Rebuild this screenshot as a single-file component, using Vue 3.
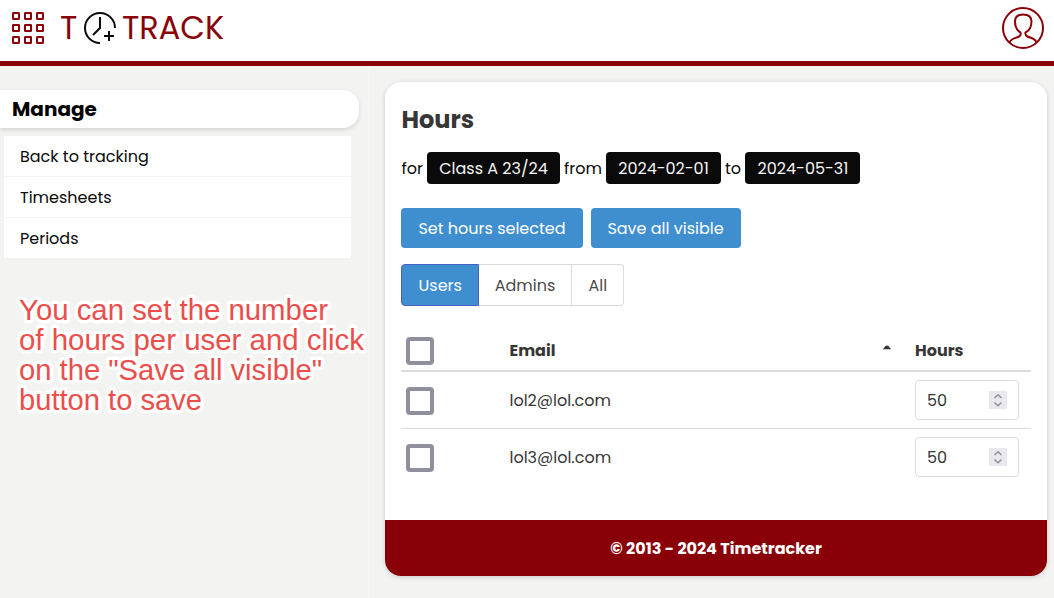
<script setup>
import { ref } from 'vue'

const menu = [
  { label: 'Back to tracking', key: 'back' },
  { label: 'Timesheets', key: 'sheets' },
  { label: 'Periods', key: 'periods' },
]
const filters = [
  { label: 'Users', key: 'users' },
  { label: 'Admins', key: 'admins' },
  { label: 'All', key: 'all' },
]
const active = ref('users')
const rows = ref([
  { email: 'lol2@lol.com', hours: 50 },
  { email: 'lol3@lol.com', hours: 50 },
])
const cells = [13, 25, 37]
const note = [
  { text: 'You can set the number', width: 309 },
  { text: 'of hours per user and click', width: 345 },
  { text: 'on the "Save all visible"', width: 303 },
  { text: 'button to save', width: 183 },
]
</script>

<template>
  <div class="page">
    <header class="topbar">
      <svg class="apps" width="48" height="48" viewBox="0 0 48 48">
        <template v-for="y in cells" :key="y">
          <rect v-for="x in cells" :key="x" :x="x" :y="y" width="6" height="6" rx="0.3" />
        </template>
      </svg>
      <div class="logo">
        <span class="logo-t">T</span>
        <svg class="clock" width="34" height="34" viewBox="0 0 34 34">
          <path d="M32 17A15 15 0 1 0 17 32M17 6V17L10 24M26 20V30M21 25H31" />
        </svg>
        <span class="logo-track">TRACK</span>
      </div>
      <svg class="user" width="44" height="44" viewBox="0 0 44 44">
        <circle cx="22" cy="22" r="20" />
        <path d="M8.5 36.5C10 32.5 14 32.5 18 30.5C20 29.5 20 28.5 19.5 26.5C15.5 24 14 20 14 15.5C14 10.5 16.500 8.500 22 8.500C28 8.500 30.500 11 30.500 15.500C30.500 20.500 28.500 24.500 24.500 26.500C24 28.500 24.500 29.500 26.500 30.500C30.500 32.500 34 32 35.500 36.500" />
      </svg>
    </header>

    <div class="body">
      <aside class="side">
        <h2 class="side-title"><span>Manage</span></h2>
        <nav class="menu">
          <a v-for="m in menu" :key="m.key" class="menu-item" :class="m.key">{{ m.label }}</a>
        </nav>
        <svg class="note" width="376" height="136" viewBox="0 0 376 136">
          <text v-for="(l, i) in note" :key="i" x="19" :y="30 + i * 30" :textLength="l.width" lengthAdjust="spacingAndGlyphs">{{ l.text }}</text>
        </svg>
      </aside>

      <main class="card">
        <div class="content">
          <h1 class="title">Hours</h1>
          <div class="range">
            <span class="w-for">for</span><span class="tag class-tag">Class A 23/24</span>
            <span class="w-from">from</span><span class="tag date-tag">2024-02-01</span>
            <span class="w-to">to</span><span class="tag date-tag end">2024-05-31</span>
          </div>
          <div class="actions">
            <button class="btn set">Set hours selected</button>
            <button class="btn save">Save all visible</button>
          </div>
          <div class="tabs">
            <button v-for="f in filters" :key="f.key" class="tab" :class="[f.key, { active: active === f.key }]" @click="active = f.key">{{ f.label }}</button>
          </div>
          <div class="table">
            <div class="row head">
              <span class="check"></span>
              <span class="email">Email</span>
              <svg class="sort" width="8" height="5" viewBox="0 0 8 5"><path d="M0 4.200Q4 -3.400 8 4.200Z" /></svg>
              <span class="hours">Hours</span>
            </div>
            <div v-for="r in rows" :key="r.email" class="row">
              <span class="check"></span>
              <span class="email">{{ r.email }}</span>
              <div class="hours">
                <div class="input">
                  <span>{{ r.hours }}</span>
                  <svg width="18" height="18" viewBox="0 0 18 18">
                    <rect width="18" height="18" />
                    <path d="M5.500 7L9 3.800L12.500 7M5.500 11.500L9 14.700L12.500 11.500" />
                  </svg>
                </div>
              </div>
            </div>
          </div>
        </div>
        <footer class="foot"><span>© 2013 - 2024 Timetracker</span></footer>
      </main>
    </div>
  </div>
</template>

<style>
html, body { margin: 0; background: #f3f3f1; overflow: hidden; }
</style>

<style scoped>
* { box-sizing: border-box; }
.page {
  width: 1054px;
  height: 598px;
  background: #f3f3f1;
  color: #0a0a0a;
  font: 16px/24px Poppins, Inter, "Noto Sans", sans-serif;
  white-space: nowrap;
}
.topbar {
  height: 66px;
  display: flex;
  align-items: flex-start;
  background: #fff;
  border-bottom: 5px solid #8a0008;
}
.apps { fill: none; stroke: #8a0008; stroke-width: 2; }
.logo { display: flex; align-items: flex-start; margin: 11px 0 0 12px; color: #8a0008; font-size: 32px; line-height: 34px; }
.logo-t { width: 23px; }
.clock { flex: none; fill: none; stroke: #0a0a0a; stroke-width: 2; }
.logo-track { margin-left: 5px; }
.user { margin: 6px 9px 0 auto; fill: none; stroke: #8a0008; stroke-width: 2; }
.body { display: flex; align-items: flex-start; }
.side { position: relative; width: 369px; height: 532px; padding-top: 24px; border-right: 1px solid #f6f6f5; }
.side-title {
  width: 359px;
  height: 38px;
  margin: 0 0 8px;
  padding-left: 12px;
  border-radius: 0 16px 16px 0;
  background: #fff;
  box-shadow: 0 2px 4px rgba(0, 0, 0, .12);
  color: #000;
  font-size: 20px;
  line-height: 38px;
}
.menu { display: grid; gap: 1px; width: 347px; margin-left: 4px; background: #f3f3f1; }
.menu-item { height: 40px; padding-left: 16px; background: #fff; line-height: 41px; }
.note { position: absolute; left: 0; top: 224px; z-index: 2; overflow: visible; }
.note text {
  font: 30px "Liberation Sans", Arial, sans-serif;
  fill: #eb4e4b;
  stroke: #fff;
  stroke-width: 7px;
  stroke-linejoin: round;
  paint-order: stroke;
}
.card {
  width: 662px;
  height: 494px;
  margin: 16px 0 0 16px;
  display: flex;
  flex-direction: column;
  border-radius: 16px;
  background: #fff;
  box-shadow: 0 1px 5px rgba(0, 0, 0, .16);
  overflow: hidden;
}
.content { flex: 1; padding: 16px 16px 0; }
.title { margin: 4px 0 0; padding-left: .5px; color: #363636; font-size: 24px; line-height: 36px; }
.range { display: flex; align-items: center; height: 32px; margin-top: 14px; line-height: 34px; }
.w-for { width: 26px; padding-left: .5px; }
.w-from { width: 46px; padding-left: 4px; }
.w-to { width: 24px; padding-left: 4px; }
.range > span { height: 32px; }
.tag { border-radius: 4px; background: #0a0a0a; color: #f5f5f5; text-align: center; }
.class-tag { width: 133px; }
.date-tag { width: 115px; }
.date-tag.end { padding-left: 1px; }
.actions { display: flex; gap: 8px; margin-top: 24px; }
.btn { height: 40px; padding: 2px 0 0; border: 0; border-radius: 4px; background: #3e8ed0; color: #fff; font: inherit; }
.set { width: 182px; }
.save { width: 150px; padding-right: 1px; }
.tabs { display: flex; height: 42px; margin-top: 16px; }
.tab { padding: 2px 0 0; border: 1px solid #dbdbdb; border-left: 0; background: #fff; color: #4a4a4a; font: inherit; }
.tab.users { width: 78px; padding-left: .5px; border-left: 1px solid #dbdbdb; border-radius: 4px 0 0 4px; }
.tab.admins { width: 93px; }
.tab.all { width: 52px; padding-left: .5px; border-radius: 0 4px 4px 0; }
.tab.active { background: #3e8ed0; border-color: #485fc7; color: #fff; }
.table { margin-top: 24px; color: #363636; }
.row { display: flex; align-items: center; height: 56px; line-height: 26px; }
.row + .row + .row { height: 57px; border-top: 1px solid #dbdbdb; }
.row.head { height: 42px; border-bottom: 2px solid #dbdbdb; font-weight: 700; }
.check { width: 28px; height: 28px; margin-left: 5px; margin-top: 2px; border: 4px solid #8f8f9d; border-radius: 4px; }
.email { margin-left: 75.5px; flex: 1; padding-top: 2px; }
.head .email, .head .hours { padding-top: 1px; }
.sort { margin: -5px 24px 0 0; fill: #363636; }
.hours { width: 116px; }
.input { display: flex; align-items: center; justify-content: space-between; width: 104px; height: 40px; padding: 0 11px; border: 1px solid #dbdbdb; border-radius: 4px; }
.input span { padding-top: 2px; }
.input rect { fill: #e9e9ed; }
.input path { fill: none; stroke: #8f8f9d; stroke-width: 1.5; }
.foot { height: 56px; background: #8a0008; color: #fff; text-align: center; font-weight: 700; line-height: 58px; }
</style>
